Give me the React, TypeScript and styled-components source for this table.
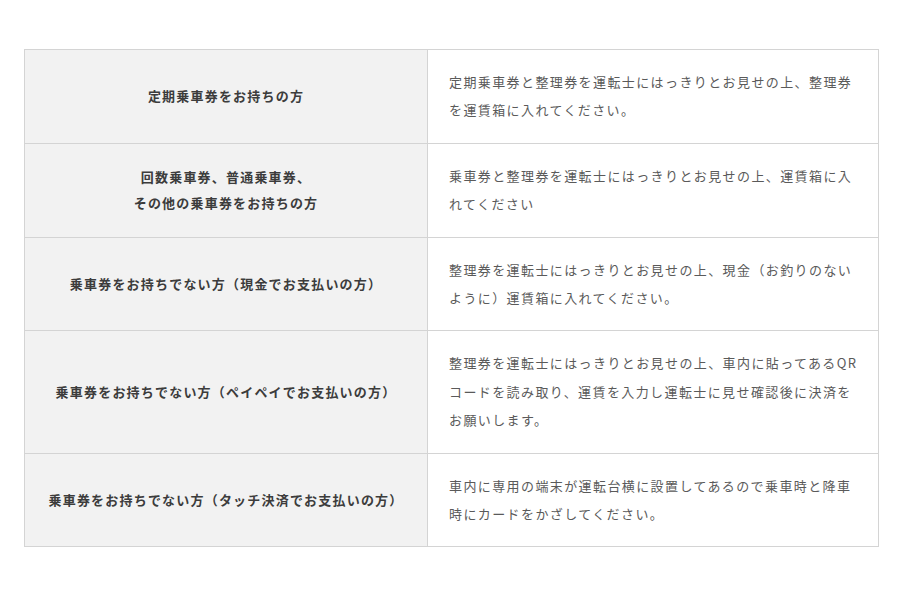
import React from "react";
import styled, { createGlobalStyle } from "styled-components";

const Global = createGlobalStyle`
  html, body { margin: 0; padding: 0; background: #ffffff; }
  body { font-family: "Noto Sans CJK JP", "Noto Sans", sans-serif; }
`;

const Page = styled.div`
  padding: 49px 22px 0 24px;
`;

const Table = styled.table`
  width: 854px;
  border-collapse: collapse;
  table-layout: fixed;
  border: 1px solid #d4d4d4;
`;

const HeadCol = styled.col`
  width: 403px;
`;

const BodyCol = styled.col`
  width: 451px;
`;

const Row = styled.tr`
  border-bottom: 1px solid #d4d4d4;
`;

const Head = styled.th`
  background: #f2f2f2;
  border-right: 1px solid #d4d4d4;
  color: #3c3c3c;
  font-size: 13px;
  font-weight: 700;
  letter-spacing: 1.2px;
  line-height: 26px;
  text-align: center;
  vertical-align: middle;
  padding: 18px 8px;
`;

const Cell = styled.td`
  background: #ffffff;
  color: #5a5a5a;
  font-size: 13px;
  font-weight: 400;
  letter-spacing: 1.4px;
  line-height: 28.4px;
  text-align: left;
  vertical-align: middle;
  padding: 18px 16px 18px 21px;
`;

const rows: { head: React.ReactNode; body: string }[] = [
  {
    head: "定期乗車券をお持ちの方",
    body: "定期乗車券と整理券を運転士にはっきりとお見せの上、整理券を運賃箱に入れてください。",
  },
  {
    head: (
      <>
        回数乗車券、普通乗車券、
        <br />
        その他の乗車券をお持ちの方
      </>
    ),
    body: "乗車券と整理券を運転士にはっきりとお見せの上、運賃箱に入れてください",
  },
  {
    head: "乗車券をお持ちでない方（現金でお支払いの方）",
    body: "整理券を運転士にはっきりとお見せの上、現金（お釣りのないように）運賃箱に入れてください。",
  },
  {
    head: "乗車券をお持ちでない方（ペイペイでお支払いの方）",
    body: "整理券を運転士にはっきりとお見せの上、車内に貼ってあるQRコードを読み取り、運賃を入力し運転士に見せ確認後に決済をお願いします。",
  },
  {
    head: "乗車券をお持ちでない方（タッチ決済でお支払いの方）",
    body: "車内に専用の端末が運転台横に設置してあるので乗車時と降車時にカードをかざしてください。",
  },
];

export default function App() {
  return (
    <>
      <Global />
      <Page>
        <Table>
          <colgroup>
            <HeadCol />
            <BodyCol />
          </colgroup>
          <tbody>
            {rows.map((r, i) => (
              <Row key={i}>
                <Head>{r.head}</Head>
                <Cell>{r.body}</Cell>
              </Row>
            ))}
          </tbody>
        </Table>
      </Page>
    </>
  );
}
